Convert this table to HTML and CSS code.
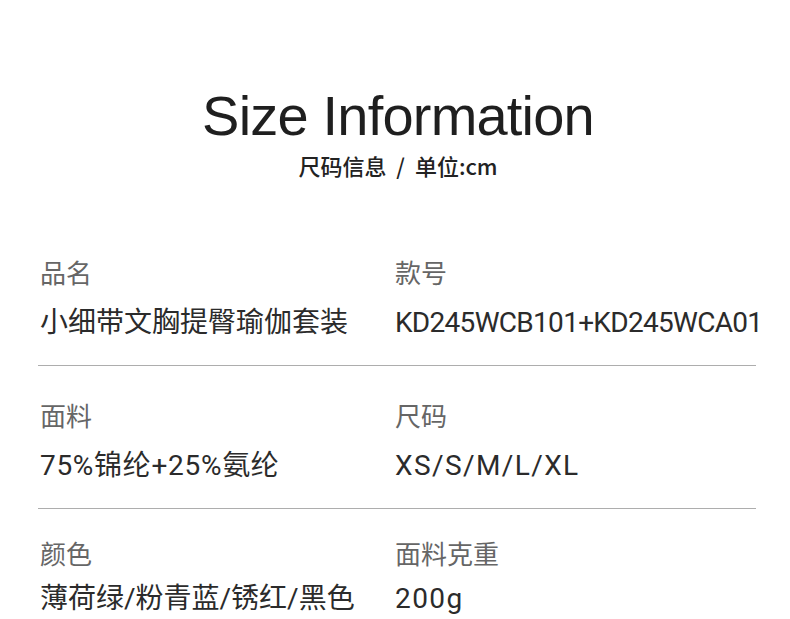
FILE: index.html
```html
<!DOCTYPE html>
<html lang="zh">
<head>
<meta charset="utf-8">
<link rel="stylesheet" href="styles.css">
</head>
<body>
<div class="page">
  <header class="header">
    <h1 class="title">Size Information</h1>
    <p class="subtitle">尺码信息 / 单位:cm</p>
  </header>
  <div class="table">
    <div class="row">
      <div class="cell">
        <div class="label">品名</div>
        <div class="value">小细带文胸提臀瑜伽套装</div>
      </div>
      <div class="cell">
        <div class="label">款号</div>
        <div class="value value-code">KD245WCB101+KD245WCA01</div>
      </div>
    </div>
    <div class="row">
      <div class="cell">
        <div class="label">面料</div>
        <div class="value value-mix">75%锦纶+25%氨纶</div>
      </div>
      <div class="cell">
        <div class="label">尺码</div>
        <div class="value value-wide">XS/S/M/L/XL</div>
      </div>
    </div>
    <div class="row row-last">
      <div class="cell">
        <div class="label">颜色</div>
        <div class="value">薄荷绿/粉青蓝/锈红/黑色</div>
      </div>
      <div class="cell">
        <div class="label">面料克重</div>
        <div class="value value-wide">200g</div>
      </div>
    </div>
  </div>
</div>
</body>
</html>
```
FILE: styles.css
```css
html, body {
  margin: 0;
  padding: 0;
  background: #ffffff;
}
.page {
  width: 790px;
  height: 619px;
  overflow: hidden;
  font-family: "Noto Sans", "Noto Sans CJK SC", sans-serif;
}
.header {
  padding-top: 84px;
  padding-left: 6px;
  text-align: center;
}
.title {
  margin: 0;
  font-family: "Liberation Sans", "Noto Sans", sans-serif;
  font-weight: 400;
  font-size: 56px;
  line-height: 64px;
  color: #1f1f1f;
  letter-spacing: -0.8px;
}
.subtitle {
  margin: 2px 0 0;
  font-family: "Noto Sans CJK SC", sans-serif;
  font-weight: 500;
  font-size: 22px;
  line-height: 30px;
  color: #222;
  word-spacing: 5px;
}
.table {
  margin: 43px 34px 0 38px;
}
.row {
  display: grid;
  grid-template-columns: 357px 1fr;
  padding: 34px 0 26px;
  border-bottom: 1px solid #adadad;
}
.row-last {
  border-bottom: none;
  padding-top: 29px;
}
.cell:first-child {
  padding-left: 2px;
}
.label {
  font-family: "Noto Sans CJK SC", sans-serif;
  font-size: 26px;
  line-height: 30px;
  color: #666666;
}
.value {
  margin-top: 20px;
  font-family: "Roboto", "Noto Sans CJK SC", sans-serif;
  font-size: 28px;
  line-height: 32px;
  color: #2b2b2b;
}
.row-last .value {
  margin-top: 15px;
}
.value-code {
  letter-spacing: -0.7px;
}
.value-mix {
  letter-spacing: 0.7px;
}
.value-wide {
  letter-spacing: 1.4px;
}
```
